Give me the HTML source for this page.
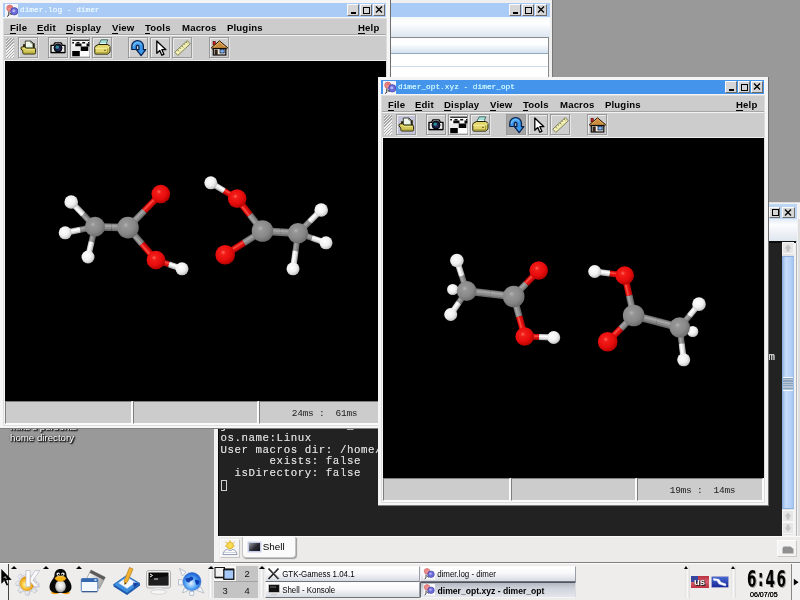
<!DOCTYPE html>
<html><head><meta charset="utf-8"><title>desktop</title>
<style>
html,body{margin:0;padding:0;overflow:hidden}
body{width:800px;height:600px;overflow:hidden;background:#999;position:relative;font-family:"Liberation Sans",sans-serif}
div,span,i,svg{position:absolute;box-sizing:border-box}
.jw{width:390.700px;height:428.800px;background:#f5f5f5;border-right:1px solid #6e6e6e;border-bottom:1px solid #808080}
.jw .tbar{left:3px;top:2.600px;width:382.700px;height:14.700px}
.jicon{left:1.500px;top:1px;width:13px;height:13px;overflow:hidden}
.ttl{left:17px;top:1.300px;font:7.800px/12px "Liberation Mono",monospace;white-space:pre;letter-spacing:0;text-shadow:0 0 .6px currentColor}
.wb{top:1.800px;width:12.300px;height:11.600px;background:#d6d6d6;border:1px solid;border-color:#fafafa #6c6c6c #6c6c6c #fafafa}
.wb svg{left:-1px;top:-1px}
.wb .mn{left:3px;top:6.500px;width:4.500px;height:1.700px;background:#000}
.wb .mx{left:2px;top:1.300px;width:7px;height:7.300px;border:1px solid #000;border-top-width:1.800px}
.inr{left:4px;top:18.500px;width:381.500px;height:406.500px;background:#f6f6f6;box-shadow:0 0 0 .8px #d8d8d8}
.mbar{left:0;top:0;width:381.500px;height:16.700px;border-bottom:1px solid #a6a6a6;background:#ccc}
.mbar span{top:3.200px;font:bold 9.600px/12px "Liberation Sans",sans-serif;color:#000;white-space:pre;letter-spacing:0.150px}
.mbar u{text-decoration:none;border-bottom:1px solid #000}
.tools{left:0;top:16.700px;width:381.500px;height:25.800px;background:#ccc;border-top:1px solid #f2f2f2;border-bottom:1.300px solid #ececec}
.grip{left:1.500px;top:2px;width:8.500px;height:20px;background:repeating-linear-gradient(135deg,#f0f0f0 0,#f0f0f0 1.100px,#a8a8a8 1.100px,#a8a8a8 2.200px)}
.tb{top:0.800px;width:20.300px;height:21.400px;border:1px solid #999;background:#cecece;box-shadow:inset 1px 1px 0 #ececec,1px 1px 0 #e6e6e6}
.tb svg{left:-1px;top:-1px}
.tb.sel{background:#c3c3da}
.tb.down{background:#a6a6a6;box-shadow:1px 1px 0 #e6e6e6}
.cv{left:1px;top:42.500px;background:#000}
.sb{left:1px;top:382.500px;width:380.500px;height:24px;background:#fafafa}
.sc{top:0;height:23.200px;background:#ccc;border:1.300px solid;border-color:#7e7e7e #fbfbfb #fbfbfb #7e7e7e}
.st{left:32.200px;top:5.900px;font:9.500px/12px "Liberation Mono",monospace;color:#1c1c1c;white-space:pre;letter-spacing:-0.230px}
.dtxt{font:9.700px/11px "Liberation Sans",sans-serif;color:#fff;white-space:pre;text-shadow:1px 1px 1px #222,1px 1px 1px #222,0 0 2px #444,1px 1px 2px #333}
.gw{left:390.500px;top:0;width:162px;height:90px;background:#efefef;border-right:1px solid #777}
.gt{left:0;top:2.600px;width:159px;height:14.700px;background:#a9cbf6}
.gm{left:0;top:17.300px;width:159px;height:20px;background:linear-gradient(#f4f8fc,#ffffff 30%,#dbe5f0)}
.gl{left:0;top:37px;width:158px;height:60px;background:#fff;border-top:1px solid #8a8a8a;border-right:1px solid #8a8a8a}
.gh{left:0;top:0;width:157px;height:16px;background:linear-gradient(#fafcfe,#ffffff 40%,#d4e2f0);border-bottom:1px solid #92a8be}
.gr{left:0;width:157px;height:1px;background:#cfdcec}
.kw{left:213.700px;top:202px;width:587px;height:361px;background:#f2f2f2;box-shadow:inset 0 1px 0 #dcdcdc}
.kt{left:3px;top:1.500px;width:580px;height:15.500px;background:#bdd6f4}
.km{left:3px;top:17px;width:580px;height:23px;background:linear-gradient(#e4ecf6,#fbfcfe 25%,#dfe6ee);border-bottom:1px solid #9aa}
.kterm{left:4px;top:39px;width:564px;height:294.500px;background:#222;overflow:hidden;border-top:2px solid #0c0c0c;border-left:1px solid #080808}
.kln{left:4px;top:39.300px;width:577.500px;height:1.700px;background:#141414}
.kx{margin:0;left:1.400px;font:10.800px/11.600px "Liberation Mono",monospace;color:#dadada;white-space:pre;letter-spacing:0.550px;text-shadow:0 0 .3px #aaa}
.kcur{left:1.800px;top:236.600px;width:6.300px;height:11.700px;border:1px solid #d0d0d0}
.ksb{left:568.300px;top:40.300px;width:12px;height:293.200px;background:#e4e4e4}
.ksa{left:0;width:12px;height:12px;background:#e6e6e6;border:1px solid #f6f6f6}
.ksa svg{left:-1px;top:-1px}
.kss{left:0;top:13.500px;width:11.700px;height:253px;background:linear-gradient(90deg,#9cbce8,#c8defa 30%,#bcd6f8 60%,#a8c8f2);border:1px solid #8cb0e0;border-right-color:#9cbcea}
.kss i{left:-0.500px;top:120px;width:10.500px;height:14.500px;background:repeating-linear-gradient(#8ea4bc 0,#8ea4bc 1.200px,#b4c6d8 1.200px,#b4c6d8 2.400px);border-top:1px solid #f4f8ff;border-bottom:1px solid #f4f8ff}
.krl{left:581.500px;top:41px;width:1px;height:293px;background:#b4b4b4}
.krs{left:584px;top:17px;width:3px;height:344px;background:#dedede}
.ktabs{left:4.500px;top:333.500px;width:582px;height:27px;background:#ecebe9;border-top:1.400px solid #fafafa}
.knew{left:1px;top:2.600px;width:20px;height:19px;border:1px solid;border-color:#fbfbfb #c4c4c4 #c4c4c4 #fbfbfb;background:#f4f4f4}
.knew svg{left:-1px;top:-1px}
.ktab{left:23px;top:0;width:54.500px;height:21.700px;background:#fafafa;border:1px solid #c4c4c4;border-top:none;border-radius:0 0 4px 4px;box-shadow:1px 1px 1px #999}
.kti{left:5.500px;top:5.800px;width:12.500px;height:9.800px;background:linear-gradient(135deg,#9a9aa2,#2a2a34 55%,#15151c);border:1px solid #c4cce8;box-shadow:0 0 0 .6px #d8dcf0}
.ktab span{left:20.200px;top:4.300px;font:9.900px/12px "Liberation Sans",sans-serif;color:#000}
.kri{left:558.500px;top:3px;width:20px;height:17px;background:#f4f4f4;border:1px solid;border-color:#fcfcfc #c8c8c8 #c8c8c8 #fcfcfc}
.kri svg{left:1.500px;top:0}
pre{position:absolute;box-sizing:border-box}
.pn{left:0;top:562px;width:800px;height:38px;background:#eeedeb;border-top:1px solid #808080;box-shadow:inset 0 1px 0 #fbfbfb}
.phl{left:0;top:0.500px;width:8.700px;height:37px;background:#f0f0f0;border-right:1px solid #444;border-bottom:1.500px solid #555}
.phl svg,.phr svg{left:0;top:0}
.phr{left:791px;top:1px;width:9.500px;height:36px;background:#f2f2f2;border-left:1px solid #888}
.ah{top:3.200px;width:0;height:0;border-left:3.500px solid transparent;border-right:3.500px solid transparent;border-bottom:3.700px solid #000}
.pi{overflow:visible}
.hd{top:3px;width:5px;height:32px;background:linear-gradient(90deg,#e2e2e2,#f8f8f8 50%,#d8d8d8)}
.pgr{left:214.300px;top:2.500px;width:43.500px;height:32.300px;background:#a2a2a2}
.pc{width:21.300px;height:15.700px;background:#c4c4c4}
.pc svg{left:0;top:0}
.pc span{left:0;top:2.500px;width:21.500px;text-align:center;font:9.400px/12px "Liberation Sans",sans-serif;color:#111}
.tk{width:155px;height:15.700px;background:linear-gradient(#ffffff,#f8f8fa 45%,#d6dae2);border:1px solid;border-color:#fcfcfc #9a9ea8 #70747c #f0f0f0}
.tk.act{background:linear-gradient(#b4b8c2,#d0d4dc 40%,#e4e6ec);border-color:#50545c #dcdce0 #f4f4f4 #60646c}
.tk svg{left:1px;top:0.300px}
.tk span{left:16.700px;top:1.600px;font:7.900px/12px "Liberation Sans",sans-serif;color:#000;white-space:pre;transform:scaleY(1.080)}
.tk.act span{font:bold 8.600px/12px "Liberation Sans",sans-serif;left:17px;top:1.800px;transform:none}
.fl{top:13px;width:17.500px;height:11.500px}
.fl.us{left:691px;background:linear-gradient(#b83040,#d86070 50%,#b83040)}
.fl.us::before{content:"";position:absolute;left:0;top:0;width:7px;height:5.500px;background:#3848a0}
.fl.us span{left:3px;top:-0.500px;font:bold 9.500px/11px "Liberation Sans",sans-serif;color:#fff;text-shadow:0 0 1px #000,1px 1px 0 #222}
.fl.nt{left:711px;background:linear-gradient(#4868d0,#182898);border:1px solid #a4a8d0;border-radius:1px}
.fl.nt svg{left:-1px;top:-1px}
.clk{left:747px;top:2.800px;font:bold 22.600px/26px "DejaVu Sans","Liberation Sans",sans-serif;color:#000;letter-spacing:2.600px;white-space:pre;transform:scaleX(.6);transform-origin:0 0;text-shadow:1.500px 1px 0 #a0a0a0}
.clk b{letter-spacing:3.500px;position:relative;top:-1px}
.dt{left:750px;top:27.800px;font:7.100px/9px "Liberation Sans",sans-serif;text-shadow:0 0 .3px #000;color:#000;white-space:pre}

.jw,.kw,.gw,.pn,.dtxt{will-change:transform}
.kt .wb{top:3.300px;height:10.800px}
.kt .wb:first-child{width:11.500px}
.ah.sm{top:3.400px;border-left-width:2.800px;border-right-width:2.800px;border-bottom-width:3.400px}
</style></head>
<body><div class="dtxt" style="left:10px;top:421px">mike's personal</div><div class="dtxt" style="left:10px;top:432px">home directory</div><div class="gw">
 <div class="gt">
  <div class="wb" style="left:118px"><i class="mn"></i></div>
  <div class="wb" style="left:130.500px"><i class="mx"></i></div>
  <div class="wb" style="left:144px"><svg width="12" height="11" viewBox="0 0 12 11"><path d="M3 2.500l6 6M9 2.500l-6 6" stroke="#000" stroke-width="1.300"/></svg></div>
 </div>
 <div class="gm"></div>
 <div class="gl"><div class="gh"></div><div class="gr" style="top:27.500px"></div><div class="gr" style="top:40.500px"></div></div>
</div>
<div class="kw">
 <div class="kt">
  <div class="wb" style="left:551.700px"><i class="mx"></i></div>
  <div class="wb" style="left:565.300px"><svg width="12" height="11" viewBox="0 0 12 11"><path d="M3 2.500l6 6M9 2.500l-6 6" stroke="#000" stroke-width="1.300"/></svg></div>
 </div>
 <div class="km"></div>
 <div class="kln"></div>
 <div class="kterm">
  <pre class="kx" style="top:177.700px">java.version:1.4.2_06</pre>
  <pre class="kx" style="top:190.200px">os.name:Linux
User macros dir: /home/mike/.jmol/macros
       exists: false
  isDirectory: false</pre>
  <div class="kcur"></div>
  <pre class="kx" style="left:549.500px;top:109px">m</pre>
 </div>
 <div class="ksb">
  <div class="ksa" style="top:0"><svg width="12" height="12" viewBox="0 0 12 12"><path d="M6 2.500l3.500 4h-2v3h-3v-3h-2z" fill="#c4c4c4"/></svg></div>
  <div class="kss"><i></i></div>
  <div class="ksa" style="top:268px"><svg width="12" height="12" viewBox="0 0 12 12"><path d="M6 2.500l3.500 4h-2v3h-3v-3h-2z" fill="#c4c4c4"/></svg></div>
  <div class="ksa" style="top:280px"><svg width="12" height="12" viewBox="0 0 12 12"><path d="M6 9.500l3.500-4h-2v-3h-3v3h-2z" fill="#c4c4c4"/></svg></div>
 </div>
 <div class="krl"></div><div class="krs"></div>
 <div class="ktabs">
  <div class="knew"><svg width="20" height="19" viewBox="0 0 20 19"><path d="M3 15.500c.5-3.500 2.500-5 4.500-5 1.200 1.300 3.800 1.300 5 0 2 0 4 1.500 4.500 5z" fill="#fdfdfd" stroke="#8a96b0" stroke-width=".9"/><path d="M3.500 13.500h13" stroke="#b0b8c8" stroke-width=".6"/><circle cx="10" cy="6.500" r="3.300" fill="#f8dc50" stroke="#d8a818" stroke-width=".8"/><path d="M10 1v2M5.500 2.800l1.300 1.500M14.500 2.800l-1.300 1.500M5 7h1.500M15 7h-1.500" stroke="#e4b020" stroke-width="1"/></svg></div>
  <div class="ktab"><i class="kti"></i><span>Shell</span></div>
  <div class="kri"><svg width="16" height="16" viewBox="0 0 16 16"><path d="M3.500 5.500h7l3 2.500v4.500h-11v-5z" fill="#909090"/></svg></div>
 </div>
</div>

<div class="jw" style="left:0px;top:0px">
 <div class="tbar" style="background:#a9cbf6">
  <div class="jicon"><svg width="14" height="14" viewBox="0 0 14 14" style="position:absolute;left:0;top:0"><rect width="14" height="14" fill="#f4f4f8"/><circle cx="4.800" cy="4.200" r="3.100" fill="#ee8c8c" stroke="#c05050" stroke-width=".6"/><path d="M3 3.500q1.800-1.500 3.600 0" fill="none" stroke="#b84848" stroke-width=".5"/><circle cx="9.300" cy="7.300" r="3.700" fill="#6c6cd8" stroke="#3434a0" stroke-width=".6"/><circle cx="8.800" cy="6.800" r="1.500" fill="#b4b4f6"/><path d="M3.800 7.500v3.800l-1.800 1.200M4.800 8.800l1.700 2.200" stroke="#1c1c1c" stroke-width=".9" fill="none"/></svg></div>
  <div class="ttl" style="color:#e8f6ff">dimer.log - dimer</div>
  <div class="wb" style="left:344px"><i class="mn"></i></div>
  <div class="wb" style="left:356.5px"><i class="mx"></i></div>
  <div class="wb" style="left:370px"><svg width="12" height="11" viewBox="0 0 12 11"><path d="M3 2.500l6 6M9 2.500l-6 6" stroke="#000" stroke-width="1.300"/></svg></div>
 </div>
 <div class="inr">
 <div class="mbar"><span style="left:6px"><u>F</u>ile</span><span style="left:33px"><u>E</u>dit</span><span style="left:62px"><u>D</u>isplay</span><span style="left:108px"><u>V</u>iew</span><span style="left:141px"><u>T</u>ools</span><span style="left:178px">Macros</span><span style="left:223px">Plugins</span><span style="left:354px"><u>H</u>elp</span></div>
 <div class="tools"><div class="grip"></div><div class="tb" style="left:13.7px"><svg width="21" height="22" viewBox="0 0 21 22"><path d="M5 7.200h3l.8-1h8v10.300H5z" fill="#2c2808"/><path d="M7.300 4h5.500l2.200 2v5.500H7.300z" fill="#f0f8ee" stroke="#1c1c10" stroke-width=".8"/><path d="M12.800 4v2h2.200" fill="none" stroke="#1c1c10" stroke-width=".6"/><path d="M8 9.500h6.500v2H8z" fill="#d4ecd8"/><path d="M3 11.800q-.3-2 1.400-2h2.400l1 1.200h8.400q1.400 0 1.400 1.300v3.400q0 1.300-1.400 1.300H6q-1.200 0-1.200-1.300v-1.500z" fill="#d4c858" stroke="#262204" stroke-width="1"/><path d="M5 11.300h2l1 1.200h8.500" fill="none" stroke="#f0e890" stroke-width=".8"/><path d="M5.500 16h11" stroke="#9a9030" stroke-width=".8"/></svg></div><div class="tb" style="left:43.7px"><svg width="21" height="22" viewBox="0 0 21 22"><path d="M3 8.300h2.600l1.200-2.300h6.400l1.200 2.300H17v7.300H3z" fill="#e4e4e4" stroke="#000" stroke-width="1.300" stroke-linejoin="round"/><path d="M3 15.400h14" stroke="#000" stroke-width="1.400"/><path d="M3.800 14h12.500" stroke="#fff" stroke-width=".9"/><path d="M7.500 6.500h5" stroke="#888" stroke-width="1"/><circle cx="10" cy="11" r="4" fill="#141c40" stroke="#000" stroke-width=".9"/><circle cx="9.300" cy="10.200" r="1.700" fill="#2c8c94"/><circle cx="11" cy="12" r="1" fill="#3c2c70"/></svg></div><div class="tb" style="left:65.6px"><svg width="21" height="22" viewBox="0 0 21 22"><rect x="2.200" y="2.600" width="17.200" height="16.600" fill="#fcfcfc"/><path d="M2.200 2.600h17.200v1.300H2.200z" fill="#222"/><path d="M3.500 3.900h2v1h-2zM7.500 3.900h2.300v1H7.500zM12 3.900h2.300v1H12zM16.500 3.900h2.300v1h-2.300z" fill="#eee"/><path d="M2.200 4.900h1.800v1.600H2.200zM6.500 4.900h3v1.600h-3zM12.200 4.900h3v1.600h-3zM18 4.900h1.400v1.600H18z" fill="#111"/><path d="M5.300 6.500h6.200v3H5.300zM16.500 6.500h2.900v3h-2.900z" fill="#0a0a0a"/><path d="M10.500 9.500h7.800V14h-7.800z" fill="#050505"/><path d="M2.200 14h7.600v5.200H2.200z" fill="#000"/><path d="M2.200 9.500h8.300V14H2.200z" fill="#ececec"/></svg></div><div class="tb" style="left:87.5px"><svg width="21" height="22" viewBox="0 0 21 22"><path d="M6.200 8.500l3-5.700h6.600l-2.300 5.700z" fill="#a4e0d8" stroke="#30544c" stroke-width=".8"/><path d="M8 6.500h6" stroke="#e4f8f4" stroke-width="1"/><path d="M2.800 10.300q0-1 1-1.300l2.500-1.500h9.500l2.200 1.800v5.500l-2.300 2.300H4q-1.200 0-1.200-1.200z" fill="#e2d66c" stroke="#242004" stroke-width="1" stroke-linejoin="round"/><path d="M3 11.300h12.500l2.300-2" fill="none" stroke="#fff8b0" stroke-width=".8"/><path d="M15.700 11.500v5.300" stroke="#8c8028" stroke-width=".8"/><path d="M3.500 15.800h12" stroke="#a89c38" stroke-width="1"/><path d="M12 13.300h2" stroke="#4c4410" stroke-width=".8"/></svg></div><div class="tb" style="left:124.2px"><svg width="21" height="22" viewBox="0 0 21 22"><path d="M3.800 12.500V9.300a5.800 5.800 0 0 1 11.600 0v3.400h2.400l-4.700 6-4.700-6h2.500V9.600a1.300 1.300 0 0 0-2.600 0v2.900z" fill="#3a98ec" stroke="#06204c" stroke-width="1.200" stroke-linejoin="round"/><path d="M5.300 9.500a4.300 4.300 0 0 1 8-1.800" fill="none" stroke="#8cccff" stroke-width="1"/></svg></div><div class="tb" style="left:146.1px"><svg width="21" height="22" viewBox="0 0 21 22"><path d="M6.800 4v12.300l3-2.800 2 4.700 2.100-.9-2-4.600h4z" fill="#fff" stroke="#000" stroke-width="1.300" stroke-linejoin="round"/></svg></div><div class="tb" style="left:168.0px"><svg width="21" height="22" viewBox="0 0 21 22"><path d="M2.800 15.200L15.300 3.600l3 3.200L5.800 18.400z" fill="#f2f0b4" stroke="#74744c" stroke-width=".9"/><path d="M5.600 12.800l1.500 1.600M7.800 10.800l1 1M9.900 8.800l1.500 1.600M12 6.800l1 1M14.100 4.900l1.500 1.600" stroke="#5c5c34" stroke-width=".7"/></svg></div><div class="tb" style="left:205.2px"><svg width="21" height="22" viewBox="0 0 21 22"><rect x="4" y="4.300" width="2.300" height="3.700" fill="#c41c1c" stroke="#400" stroke-width=".5"/><path d="M2.300 10.800l8.200-7 8.200 7-1.300 1.200H3.600z" fill="#c88c3c" stroke="#2c1804" stroke-width="1" stroke-linejoin="round"/><path d="M5 9.800l5.500-4.700 5.500 4.700" fill="none" stroke="#e8b868" stroke-width=".9"/><rect x="4.300" y="11.500" width="12.500" height="6.500" fill="#f4ecdc" stroke="#0c0c0c" stroke-width="1.200"/><rect x="5.500" y="12.500" width="3.200" height="5.500" fill="#30241c"/><rect x="11" y="12.500" width="4.200" height="3.500" fill="#4488d8" stroke="#0c1c3c" stroke-width=".7"/><path d="M13.100 12.500v3.500M11 14.200h4.200" stroke="#cce0f8" stroke-width=".5"/></svg></div></div>
 <svg class="cv" width="381" height="340" viewBox="0 0 381 340"><defs>
<radialGradient id="gC" cx="40%" cy="38%" r="68%"><stop offset="0" stop-color="#b4b4b4"/><stop offset="0.18" stop-color="#969696"/><stop offset="0.6" stop-color="#888888"/><stop offset="1" stop-color="#666666"/></radialGradient>
<radialGradient id="gO" cx="40%" cy="38%" r="68%"><stop offset="0" stop-color="#ff6a60"/><stop offset="0.18" stop-color="#f21c18"/><stop offset="0.6" stop-color="#e60c0c"/><stop offset="1" stop-color="#ac0000"/></radialGradient>
<radialGradient id="gH" cx="40%" cy="38%" r="68%"><stop offset="0" stop-color="#ffffff"/><stop offset="0.55" stop-color="#f0f0f0"/><stop offset="1" stop-color="#b8b8b8"/></radialGradient>
</defs><line x1="90.0" y1="165.8" x2="78.1" y2="153.4" stroke="#6c6c6c" stroke-width="6.0"/><line x1="89.7" y1="166.0" x2="77.8" y2="153.6" stroke="#8c8c8c" stroke-width="4.1"/><line x1="89.4" y1="166.4" x2="77.5" y2="154.0" stroke="#a4a4a4" stroke-width="1.6"/><line x1="78.1" y1="153.4" x2="66.2" y2="141.0" stroke="#b4b4b4" stroke-width="6.0"/><line x1="77.8" y1="153.6" x2="65.9" y2="141.2" stroke="#e6e6e6" stroke-width="4.1"/><line x1="77.5" y1="154.0" x2="65.6" y2="141.6" stroke="#ffffff" stroke-width="1.6"/><line x1="90.0" y1="165.8" x2="75.1" y2="168.8" stroke="#6c6c6c" stroke-width="6.0"/><line x1="89.9" y1="165.4" x2="75.0" y2="168.4" stroke="#8c8c8c" stroke-width="4.1"/><line x1="89.8" y1="165.0" x2="74.9" y2="168.0" stroke="#a4a4a4" stroke-width="1.6"/><line x1="75.1" y1="168.8" x2="60.2" y2="171.8" stroke="#b4b4b4" stroke-width="6.0"/><line x1="75.0" y1="168.4" x2="60.1" y2="171.4" stroke="#e6e6e6" stroke-width="4.1"/><line x1="74.9" y1="168.0" x2="60.0" y2="171.0" stroke="#ffffff" stroke-width="1.6"/><line x1="90.0" y1="165.8" x2="86.5" y2="180.9" stroke="#6c6c6c" stroke-width="6.0"/><line x1="89.6" y1="165.7" x2="86.1" y2="180.8" stroke="#8c8c8c" stroke-width="4.1"/><line x1="89.2" y1="165.6" x2="85.7" y2="180.7" stroke="#a4a4a4" stroke-width="1.6"/><line x1="86.5" y1="180.9" x2="83.0" y2="196.0" stroke="#b4b4b4" stroke-width="6.0"/><line x1="86.1" y1="180.8" x2="82.6" y2="195.9" stroke="#e6e6e6" stroke-width="4.1"/><line x1="85.7" y1="180.7" x2="82.2" y2="195.8" stroke="#ffffff" stroke-width="1.6"/><circle cx="66.2" cy="141" r="6.8" fill="url(#gH)"/><circle cx="60.2" cy="171.8" r="6.5" fill="url(#gH)"/><circle cx="83" cy="196" r="6.5" fill="url(#gH)"/><line x1="90.0" y1="165.8" x2="106.5" y2="166.2" stroke="#6c6c6c" stroke-width="7.6"/><line x1="90.0" y1="165.3" x2="106.5" y2="165.7" stroke="#8c8c8c" stroke-width="5.2"/><line x1="90.0" y1="164.7" x2="106.5" y2="165.1" stroke="#a4a4a4" stroke-width="2.0"/><line x1="106.5" y1="166.2" x2="123.0" y2="166.6" stroke="#6c6c6c" stroke-width="7.6"/><line x1="106.5" y1="165.7" x2="123.0" y2="166.1" stroke="#8c8c8c" stroke-width="5.2"/><line x1="106.5" y1="165.1" x2="123.0" y2="165.5" stroke="#a4a4a4" stroke-width="2.0"/><circle cx="90" cy="165.8" r="10" fill="url(#gC)"/><line x1="123.0" y1="166.6" x2="139.4" y2="149.8" stroke="#6c6c6c" stroke-width="6.6"/><line x1="122.7" y1="166.3" x2="139.1" y2="149.5" stroke="#8c8c8c" stroke-width="4.5"/><line x1="122.3" y1="166.0" x2="138.7" y2="149.2" stroke="#a4a4a4" stroke-width="1.7"/><line x1="139.4" y1="149.8" x2="155.8" y2="133.0" stroke="#b40808" stroke-width="6.6"/><line x1="139.1" y1="149.5" x2="155.5" y2="132.7" stroke="#e41212" stroke-width="4.5"/><line x1="138.7" y1="149.2" x2="155.1" y2="132.4" stroke="#f64a40" stroke-width="1.7"/><line x1="123.0" y1="166.6" x2="137.0" y2="182.8" stroke="#6c6c6c" stroke-width="6.6"/><line x1="122.7" y1="166.9" x2="136.7" y2="183.1" stroke="#8c8c8c" stroke-width="4.5"/><line x1="122.3" y1="167.2" x2="136.3" y2="183.4" stroke="#a4a4a4" stroke-width="1.7"/><line x1="137.0" y1="182.8" x2="151.0" y2="199.0" stroke="#b40808" stroke-width="6.6"/><line x1="136.7" y1="183.1" x2="150.7" y2="199.3" stroke="#e41212" stroke-width="4.5"/><line x1="136.3" y1="183.4" x2="150.3" y2="199.6" stroke="#f64a40" stroke-width="1.7"/><circle cx="123" cy="166.6" r="10.8" fill="url(#gC)"/><circle cx="155.8" cy="133" r="9.3" fill="url(#gO)"/><line x1="151.0" y1="199.0" x2="164.0" y2="203.4" stroke="#b40808" stroke-width="6.0"/><line x1="151.1" y1="198.7" x2="164.1" y2="203.1" stroke="#e41212" stroke-width="4.1"/><line x1="151.3" y1="198.2" x2="164.3" y2="202.6" stroke="#f64a40" stroke-width="1.6"/><line x1="164.0" y1="203.4" x2="177.0" y2="207.8" stroke="#b4b4b4" stroke-width="6.0"/><line x1="164.1" y1="203.1" x2="177.1" y2="207.5" stroke="#e6e6e6" stroke-width="4.1"/><line x1="164.3" y1="202.6" x2="177.3" y2="207.0" stroke="#ffffff" stroke-width="1.6"/><circle cx="151" cy="199" r="9.3" fill="url(#gO)"/><circle cx="177" cy="207.8" r="6.5" fill="url(#gH)"/><line x1="232.2" y1="137.6" x2="219.0" y2="129.7" stroke="#b40808" stroke-width="6.0"/><line x1="232.4" y1="137.3" x2="219.2" y2="129.4" stroke="#e41212" stroke-width="4.1"/><line x1="232.6" y1="136.9" x2="219.4" y2="129.0" stroke="#f64a40" stroke-width="1.6"/><line x1="219.0" y1="129.7" x2="205.8" y2="121.8" stroke="#b4b4b4" stroke-width="6.0"/><line x1="219.2" y1="129.4" x2="206.0" y2="121.5" stroke="#e6e6e6" stroke-width="4.1"/><line x1="219.4" y1="129.0" x2="206.2" y2="121.1" stroke="#ffffff" stroke-width="1.6"/><circle cx="205.8" cy="121.80000000000001" r="6.5" fill="url(#gH)"/><line x1="257.5" y1="170.0" x2="244.8" y2="153.8" stroke="#6c6c6c" stroke-width="6.6"/><line x1="257.2" y1="170.2" x2="244.5" y2="154.0" stroke="#8c8c8c" stroke-width="4.5"/><line x1="256.8" y1="170.6" x2="244.1" y2="154.4" stroke="#a4a4a4" stroke-width="1.7"/><line x1="244.8" y1="153.8" x2="232.2" y2="137.6" stroke="#b40808" stroke-width="6.6"/><line x1="244.5" y1="154.0" x2="231.9" y2="137.8" stroke="#e41212" stroke-width="4.5"/><line x1="244.1" y1="154.4" x2="231.5" y2="138.2" stroke="#f64a40" stroke-width="1.7"/><line x1="257.5" y1="170.0" x2="238.8" y2="181.9" stroke="#6c6c6c" stroke-width="6.6"/><line x1="257.3" y1="169.7" x2="238.6" y2="181.6" stroke="#8c8c8c" stroke-width="4.5"/><line x1="257.0" y1="169.2" x2="238.4" y2="181.1" stroke="#a4a4a4" stroke-width="1.7"/><line x1="238.8" y1="181.9" x2="220.2" y2="193.8" stroke="#b40808" stroke-width="6.6"/><line x1="238.6" y1="181.6" x2="220.0" y2="193.5" stroke="#e41212" stroke-width="4.5"/><line x1="238.4" y1="181.1" x2="219.7" y2="193.0" stroke="#f64a40" stroke-width="1.7"/><line x1="257.5" y1="170.0" x2="275.2" y2="171.1" stroke="#6c6c6c" stroke-width="7.6"/><line x1="257.5" y1="169.5" x2="275.3" y2="170.6" stroke="#8c8c8c" stroke-width="5.2"/><line x1="257.6" y1="168.9" x2="275.3" y2="170.0" stroke="#a4a4a4" stroke-width="2.0"/><line x1="275.2" y1="171.1" x2="293.0" y2="172.2" stroke="#6c6c6c" stroke-width="7.6"/><line x1="275.3" y1="170.6" x2="293.0" y2="171.7" stroke="#8c8c8c" stroke-width="5.2"/><line x1="275.3" y1="170.0" x2="293.1" y2="171.1" stroke="#a4a4a4" stroke-width="2.0"/><circle cx="232.2" cy="137.6" r="9.3" fill="url(#gO)"/><circle cx="220.2" cy="193.8" r="9.8" fill="url(#gO)"/><circle cx="257.5" cy="170" r="10.8" fill="url(#gC)"/><line x1="293.0" y1="172.2" x2="304.6" y2="160.6" stroke="#6c6c6c" stroke-width="6.0"/><line x1="292.7" y1="171.9" x2="304.3" y2="160.3" stroke="#8c8c8c" stroke-width="4.1"/><line x1="292.4" y1="171.6" x2="304.0" y2="160.0" stroke="#a4a4a4" stroke-width="1.6"/><line x1="304.6" y1="160.6" x2="316.2" y2="149.0" stroke="#b4b4b4" stroke-width="6.0"/><line x1="304.3" y1="160.3" x2="315.9" y2="148.7" stroke="#e6e6e6" stroke-width="4.1"/><line x1="304.0" y1="160.0" x2="315.6" y2="148.4" stroke="#ffffff" stroke-width="1.6"/><line x1="293.0" y1="172.2" x2="307.0" y2="177.0" stroke="#6c6c6c" stroke-width="6.0"/><line x1="293.1" y1="171.9" x2="307.1" y2="176.7" stroke="#8c8c8c" stroke-width="4.1"/><line x1="293.3" y1="171.4" x2="307.3" y2="176.2" stroke="#a4a4a4" stroke-width="1.6"/><line x1="307.0" y1="177.0" x2="321.0" y2="181.8" stroke="#b4b4b4" stroke-width="6.0"/><line x1="307.1" y1="176.7" x2="321.1" y2="181.5" stroke="#e6e6e6" stroke-width="4.1"/><line x1="307.3" y1="176.2" x2="321.3" y2="181.0" stroke="#ffffff" stroke-width="1.6"/><line x1="293.0" y1="172.2" x2="290.5" y2="190.0" stroke="#6c6c6c" stroke-width="6.0"/><line x1="292.6" y1="172.1" x2="290.1" y2="189.9" stroke="#8c8c8c" stroke-width="4.1"/><line x1="292.2" y1="172.1" x2="289.7" y2="189.9" stroke="#a4a4a4" stroke-width="1.6"/><line x1="290.5" y1="190.0" x2="288.0" y2="207.8" stroke="#b4b4b4" stroke-width="6.0"/><line x1="290.1" y1="189.9" x2="287.6" y2="207.7" stroke="#e6e6e6" stroke-width="4.1"/><line x1="289.7" y1="189.9" x2="287.2" y2="207.7" stroke="#ffffff" stroke-width="1.6"/><circle cx="293" cy="172.2" r="10.3" fill="url(#gC)"/><circle cx="316.2" cy="149" r="6.8" fill="url(#gH)"/><circle cx="321" cy="181.8" r="6.5" fill="url(#gH)"/><circle cx="288" cy="207.8" r="6.5" fill="url(#gH)"/></svg>
 <div class="sb">
  <div class="sc" style="left:0;width:127px"></div>
  <div class="sc" style="left:128px;width:124.500px"></div>
  <div class="sc" style="left:253.500px;width:126px"><span class="st">24ms :  61ms</span></div>
 </div>
 </div>
</div>
<div class="jw" style="left:378.3px;top:76.5px">
 <div class="tbar" style="background:#4394ea">
  <div class="jicon"><svg width="14" height="14" viewBox="0 0 14 14" style="position:absolute;left:0;top:0"><rect width="14" height="14" fill="#f4f4f8"/><circle cx="4.800" cy="4.200" r="3.100" fill="#ee8c8c" stroke="#c05050" stroke-width=".6"/><path d="M3 3.500q1.800-1.500 3.600 0" fill="none" stroke="#b84848" stroke-width=".5"/><circle cx="9.300" cy="7.300" r="3.700" fill="#6c6cd8" stroke="#3434a0" stroke-width=".6"/><circle cx="8.800" cy="6.800" r="1.500" fill="#b4b4f6"/><path d="M3.800 7.500v3.800l-1.800 1.200M4.800 8.800l1.700 2.200" stroke="#1c1c1c" stroke-width=".9" fill="none"/></svg></div>
  <div class="ttl" style="color:#c8f4ff">dimer_opt.xyz - dimer_opt</div>
  <div class="wb" style="left:344px"><i class="mn"></i></div>
  <div class="wb" style="left:356.5px"><i class="mx"></i></div>
  <div class="wb" style="left:370px"><svg width="12" height="11" viewBox="0 0 12 11"><path d="M3 2.500l6 6M9 2.500l-6 6" stroke="#000" stroke-width="1.300"/></svg></div>
 </div>
 <div class="inr">
 <div class="mbar"><span style="left:6px"><u>F</u>ile</span><span style="left:33px"><u>E</u>dit</span><span style="left:62px"><u>D</u>isplay</span><span style="left:108px"><u>V</u>iew</span><span style="left:141px"><u>T</u>ools</span><span style="left:178px">Macros</span><span style="left:223px">Plugins</span><span style="left:354px"><u>H</u>elp</span></div>
 <div class="tools"><div class="grip"></div><div class="tb sel" style="left:13.7px"><svg width="21" height="22" viewBox="0 0 21 22"><path d="M5 7.200h3l.8-1h8v10.300H5z" fill="#2c2808"/><path d="M7.300 4h5.500l2.200 2v5.500H7.300z" fill="#f0f8ee" stroke="#1c1c10" stroke-width=".8"/><path d="M12.800 4v2h2.200" fill="none" stroke="#1c1c10" stroke-width=".6"/><path d="M8 9.500h6.500v2H8z" fill="#d4ecd8"/><path d="M3 11.800q-.3-2 1.400-2h2.400l1 1.200h8.400q1.400 0 1.400 1.300v3.400q0 1.300-1.400 1.300H6q-1.200 0-1.200-1.300v-1.500z" fill="#d4c858" stroke="#262204" stroke-width="1"/><path d="M5 11.300h2l1 1.200h8.500" fill="none" stroke="#f0e890" stroke-width=".8"/><path d="M5.500 16h11" stroke="#9a9030" stroke-width=".8"/></svg></div><div class="tb" style="left:43.7px"><svg width="21" height="22" viewBox="0 0 21 22"><path d="M3 8.300h2.600l1.200-2.300h6.400l1.200 2.300H17v7.300H3z" fill="#e4e4e4" stroke="#000" stroke-width="1.300" stroke-linejoin="round"/><path d="M3 15.400h14" stroke="#000" stroke-width="1.400"/><path d="M3.800 14h12.500" stroke="#fff" stroke-width=".9"/><path d="M7.500 6.500h5" stroke="#888" stroke-width="1"/><circle cx="10" cy="11" r="4" fill="#141c40" stroke="#000" stroke-width=".9"/><circle cx="9.300" cy="10.200" r="1.700" fill="#2c8c94"/><circle cx="11" cy="12" r="1" fill="#3c2c70"/></svg></div><div class="tb" style="left:65.6px"><svg width="21" height="22" viewBox="0 0 21 22"><rect x="2.200" y="2.600" width="17.200" height="16.600" fill="#fcfcfc"/><path d="M2.200 2.600h17.200v1.300H2.200z" fill="#222"/><path d="M3.500 3.900h2v1h-2zM7.500 3.900h2.300v1H7.500zM12 3.900h2.300v1H12zM16.500 3.900h2.300v1h-2.300z" fill="#eee"/><path d="M2.200 4.900h1.800v1.600H2.200zM6.500 4.900h3v1.600h-3zM12.200 4.900h3v1.600h-3zM18 4.900h1.400v1.600H18z" fill="#111"/><path d="M5.300 6.500h6.200v3H5.300zM16.500 6.500h2.900v3h-2.900z" fill="#0a0a0a"/><path d="M10.500 9.500h7.800V14h-7.800z" fill="#050505"/><path d="M2.200 14h7.600v5.200H2.200z" fill="#000"/><path d="M2.200 9.500h8.300V14H2.200z" fill="#ececec"/></svg></div><div class="tb" style="left:87.5px"><svg width="21" height="22" viewBox="0 0 21 22"><path d="M6.200 8.500l3-5.700h6.600l-2.300 5.700z" fill="#a4e0d8" stroke="#30544c" stroke-width=".8"/><path d="M8 6.500h6" stroke="#e4f8f4" stroke-width="1"/><path d="M2.800 10.300q0-1 1-1.300l2.500-1.500h9.500l2.200 1.800v5.500l-2.300 2.300H4q-1.200 0-1.200-1.200z" fill="#e2d66c" stroke="#242004" stroke-width="1" stroke-linejoin="round"/><path d="M3 11.300h12.500l2.300-2" fill="none" stroke="#fff8b0" stroke-width=".8"/><path d="M15.700 11.500v5.300" stroke="#8c8028" stroke-width=".8"/><path d="M3.500 15.800h12" stroke="#a89c38" stroke-width="1"/><path d="M12 13.300h2" stroke="#4c4410" stroke-width=".8"/></svg></div><div class="tb down" style="left:124.2px"><svg width="21" height="22" viewBox="0 0 21 22"><path d="M3.800 12.500V9.300a5.800 5.800 0 0 1 11.600 0v3.400h2.400l-4.700 6-4.700-6h2.500V9.600a1.300 1.300 0 0 0-2.600 0v2.900z" fill="#3a98ec" stroke="#06204c" stroke-width="1.200" stroke-linejoin="round"/><path d="M5.300 9.500a4.300 4.300 0 0 1 8-1.800" fill="none" stroke="#8cccff" stroke-width="1"/></svg></div><div class="tb" style="left:146.1px"><svg width="21" height="22" viewBox="0 0 21 22"><path d="M6.800 4v12.300l3-2.800 2 4.700 2.100-.9-2-4.600h4z" fill="#fff" stroke="#000" stroke-width="1.300" stroke-linejoin="round"/></svg></div><div class="tb" style="left:168.0px"><svg width="21" height="22" viewBox="0 0 21 22"><path d="M2.800 15.200L15.300 3.600l3 3.200L5.800 18.400z" fill="#f2f0b4" stroke="#74744c" stroke-width=".9"/><path d="M5.600 12.800l1.500 1.600M7.800 10.800l1 1M9.900 8.800l1.500 1.600M12 6.800l1 1M14.100 4.900l1.500 1.600" stroke="#5c5c34" stroke-width=".7"/></svg></div><div class="tb" style="left:205.2px"><svg width="21" height="22" viewBox="0 0 21 22"><rect x="4" y="4.300" width="2.300" height="3.700" fill="#c41c1c" stroke="#400" stroke-width=".5"/><path d="M2.300 10.800l8.200-7 8.200 7-1.300 1.200H3.600z" fill="#c88c3c" stroke="#2c1804" stroke-width="1" stroke-linejoin="round"/><path d="M5 9.800l5.500-4.700 5.500 4.700" fill="none" stroke="#e8b868" stroke-width=".9"/><rect x="4.300" y="11.500" width="12.500" height="6.500" fill="#f4ecdc" stroke="#0c0c0c" stroke-width="1.200"/><rect x="5.500" y="12.500" width="3.200" height="5.500" fill="#30241c"/><rect x="11" y="12.500" width="4.200" height="3.500" fill="#4488d8" stroke="#0c1c3c" stroke-width=".7"/><path d="M13.100 12.500v3.500M11 14.200h4.200" stroke="#cce0f8" stroke-width=".5"/></svg></div></div>
 <svg class="cv" width="381" height="340" viewBox="0 0 381 340"><line x1="83.7" y1="153.0" x2="76.7" y2="152.2" stroke="#6c6c6c" stroke-width="6.0"/><line x1="83.7" y1="152.6" x2="76.7" y2="151.9" stroke="#8c8c8c" stroke-width="4.1"/><line x1="83.8" y1="152.2" x2="76.8" y2="151.4" stroke="#a4a4a4" stroke-width="1.6"/><line x1="76.7" y1="152.2" x2="69.7" y2="151.5" stroke="#b4b4b4" stroke-width="6.0"/><line x1="76.7" y1="151.9" x2="69.7" y2="151.1" stroke="#e6e6e6" stroke-width="4.1"/><line x1="76.8" y1="151.4" x2="69.8" y2="150.7" stroke="#ffffff" stroke-width="1.6"/><circle cx="69.69999999999999" cy="151.5" r="5.6" fill="url(#gH)"/><line x1="83.7" y1="153.0" x2="78.8" y2="137.8" stroke="#6c6c6c" stroke-width="6.0"/><line x1="83.4" y1="153.1" x2="78.5" y2="137.9" stroke="#8c8c8c" stroke-width="4.1"/><line x1="82.9" y1="153.3" x2="78.0" y2="138.0" stroke="#a4a4a4" stroke-width="1.6"/><line x1="78.8" y1="137.8" x2="73.9" y2="122.5" stroke="#b4b4b4" stroke-width="6.0"/><line x1="78.5" y1="137.9" x2="73.6" y2="122.6" stroke="#e6e6e6" stroke-width="4.1"/><line x1="78.0" y1="138.0" x2="73.1" y2="122.8" stroke="#ffffff" stroke-width="1.6"/><line x1="83.7" y1="153.0" x2="75.7" y2="164.8" stroke="#6c6c6c" stroke-width="6.0"/><line x1="83.4" y1="152.8" x2="75.4" y2="164.5" stroke="#8c8c8c" stroke-width="4.1"/><line x1="83.0" y1="152.5" x2="75.0" y2="164.3" stroke="#a4a4a4" stroke-width="1.6"/><line x1="75.7" y1="164.8" x2="67.7" y2="176.5" stroke="#b4b4b4" stroke-width="6.0"/><line x1="75.4" y1="164.5" x2="67.4" y2="176.3" stroke="#e6e6e6" stroke-width="4.1"/><line x1="75.0" y1="164.3" x2="67.0" y2="176.0" stroke="#ffffff" stroke-width="1.6"/><circle cx="73.89999999999998" cy="122.5" r="6.8" fill="url(#gH)"/><circle cx="67.69999999999999" cy="176.5" r="6.5" fill="url(#gH)"/><line x1="83.7" y1="153.0" x2="107.2" y2="155.8" stroke="#6c6c6c" stroke-width="7.6"/><line x1="83.8" y1="152.5" x2="107.3" y2="155.3" stroke="#8c8c8c" stroke-width="5.2"/><line x1="83.8" y1="151.9" x2="107.3" y2="154.7" stroke="#a4a4a4" stroke-width="2.0"/><line x1="107.2" y1="155.8" x2="130.7" y2="158.5" stroke="#6c6c6c" stroke-width="7.6"/><line x1="107.3" y1="155.3" x2="130.8" y2="158.0" stroke="#8c8c8c" stroke-width="5.2"/><line x1="107.3" y1="154.7" x2="130.8" y2="157.4" stroke="#a4a4a4" stroke-width="2.0"/><circle cx="83.69999999999999" cy="153.0" r="9.9" fill="url(#gC)"/><line x1="130.7" y1="158.5" x2="143.2" y2="145.5" stroke="#6c6c6c" stroke-width="6.6"/><line x1="130.4" y1="158.2" x2="142.9" y2="145.2" stroke="#8c8c8c" stroke-width="4.5"/><line x1="130.0" y1="157.9" x2="142.5" y2="144.9" stroke="#a4a4a4" stroke-width="1.7"/><line x1="143.2" y1="145.5" x2="155.7" y2="132.5" stroke="#b40808" stroke-width="6.6"/><line x1="142.9" y1="145.2" x2="155.4" y2="132.2" stroke="#e41212" stroke-width="4.5"/><line x1="142.5" y1="144.9" x2="155.0" y2="131.9" stroke="#f64a40" stroke-width="1.7"/><line x1="130.7" y1="158.5" x2="136.2" y2="178.5" stroke="#6c6c6c" stroke-width="6.6"/><line x1="130.3" y1="158.6" x2="135.8" y2="178.6" stroke="#8c8c8c" stroke-width="4.5"/><line x1="129.8" y1="158.7" x2="135.3" y2="178.7" stroke="#a4a4a4" stroke-width="1.7"/><line x1="136.2" y1="178.5" x2="141.7" y2="198.5" stroke="#b40808" stroke-width="6.6"/><line x1="135.8" y1="178.6" x2="141.3" y2="198.6" stroke="#e41212" stroke-width="4.5"/><line x1="135.3" y1="178.7" x2="140.8" y2="198.7" stroke="#f64a40" stroke-width="1.7"/><circle cx="130.7" cy="158.5" r="10.8" fill="url(#gC)"/><circle cx="155.7" cy="132.5" r="9.3" fill="url(#gO)"/><line x1="141.7" y1="198.5" x2="156.2" y2="199.0" stroke="#b40808" stroke-width="6.0"/><line x1="141.7" y1="198.1" x2="156.2" y2="198.6" stroke="#e41212" stroke-width="4.1"/><line x1="141.7" y1="197.7" x2="156.2" y2="198.2" stroke="#f64a40" stroke-width="1.6"/><line x1="156.2" y1="199.0" x2="170.7" y2="199.5" stroke="#b4b4b4" stroke-width="6.0"/><line x1="156.2" y1="198.6" x2="170.7" y2="199.1" stroke="#e6e6e6" stroke-width="4.1"/><line x1="156.2" y1="198.2" x2="170.7" y2="198.7" stroke="#ffffff" stroke-width="1.6"/><circle cx="141.7" cy="198.5" r="9.3" fill="url(#gO)"/><circle cx="170.7" cy="199.5" r="6.5" fill="url(#gH)"/><line x1="241.7" y1="137.5" x2="226.7" y2="135.5" stroke="#b40808" stroke-width="6.0"/><line x1="241.7" y1="137.1" x2="226.7" y2="135.1" stroke="#e41212" stroke-width="4.1"/><line x1="241.8" y1="136.7" x2="226.8" y2="134.7" stroke="#f64a40" stroke-width="1.6"/><line x1="226.7" y1="135.5" x2="211.7" y2="133.5" stroke="#b4b4b4" stroke-width="6.0"/><line x1="226.7" y1="135.1" x2="211.7" y2="133.1" stroke="#e6e6e6" stroke-width="4.1"/><line x1="226.8" y1="134.7" x2="211.8" y2="132.7" stroke="#ffffff" stroke-width="1.6"/><circle cx="211.7" cy="133.5" r="6.5" fill="url(#gH)"/><line x1="250.7" y1="177.5" x2="246.2" y2="157.5" stroke="#6c6c6c" stroke-width="6.6"/><line x1="250.3" y1="177.6" x2="245.8" y2="157.6" stroke="#8c8c8c" stroke-width="4.5"/><line x1="249.8" y1="177.7" x2="245.3" y2="157.7" stroke="#a4a4a4" stroke-width="1.7"/><line x1="246.2" y1="157.5" x2="241.7" y2="137.5" stroke="#b40808" stroke-width="6.6"/><line x1="245.8" y1="157.6" x2="241.3" y2="137.6" stroke="#e41212" stroke-width="4.5"/><line x1="245.3" y1="157.7" x2="240.8" y2="137.7" stroke="#f64a40" stroke-width="1.7"/><line x1="250.7" y1="177.5" x2="237.7" y2="190.6" stroke="#6c6c6c" stroke-width="6.6"/><line x1="250.4" y1="177.2" x2="237.4" y2="190.3" stroke="#8c8c8c" stroke-width="4.5"/><line x1="250.0" y1="176.8" x2="237.0" y2="189.9" stroke="#a4a4a4" stroke-width="1.7"/><line x1="237.7" y1="190.6" x2="224.7" y2="203.7" stroke="#b40808" stroke-width="6.6"/><line x1="237.4" y1="190.3" x2="224.4" y2="203.4" stroke="#e41212" stroke-width="4.5"/><line x1="237.0" y1="189.9" x2="224.0" y2="203.0" stroke="#f64a40" stroke-width="1.7"/><circle cx="241.7" cy="137.5" r="9.3" fill="url(#gO)"/><circle cx="224.7" cy="203.7" r="9.8" fill="url(#gO)"/><line x1="296.7" y1="189.5" x2="303.2" y2="191.5" stroke="#6c6c6c" stroke-width="6.0"/><line x1="296.8" y1="189.2" x2="303.3" y2="191.2" stroke="#8c8c8c" stroke-width="4.1"/><line x1="296.9" y1="188.7" x2="303.4" y2="190.7" stroke="#a4a4a4" stroke-width="1.6"/><line x1="303.2" y1="191.5" x2="309.7" y2="193.5" stroke="#b4b4b4" stroke-width="6.0"/><line x1="303.3" y1="191.2" x2="309.8" y2="193.2" stroke="#e6e6e6" stroke-width="4.1"/><line x1="303.4" y1="190.7" x2="309.9" y2="192.7" stroke="#ffffff" stroke-width="1.6"/><circle cx="309.7" cy="193.5" r="5.6" fill="url(#gH)"/><line x1="250.7" y1="177.5" x2="273.7" y2="183.5" stroke="#6c6c6c" stroke-width="7.6"/><line x1="250.8" y1="177.1" x2="273.8" y2="183.1" stroke="#8c8c8c" stroke-width="5.2"/><line x1="251.0" y1="176.5" x2="274.0" y2="182.5" stroke="#a4a4a4" stroke-width="2.0"/><line x1="273.7" y1="183.5" x2="296.7" y2="189.5" stroke="#6c6c6c" stroke-width="7.6"/><line x1="273.8" y1="183.1" x2="296.8" y2="189.1" stroke="#8c8c8c" stroke-width="5.2"/><line x1="274.0" y1="182.5" x2="297.0" y2="188.5" stroke="#a4a4a4" stroke-width="2.0"/><circle cx="250.7" cy="177.5" r="10.8" fill="url(#gC)"/><line x1="296.7" y1="189.5" x2="306.3" y2="177.8" stroke="#6c6c6c" stroke-width="6.0"/><line x1="296.4" y1="189.3" x2="306.1" y2="177.6" stroke="#8c8c8c" stroke-width="4.1"/><line x1="296.1" y1="189.0" x2="305.7" y2="177.3" stroke="#a4a4a4" stroke-width="1.6"/><line x1="306.3" y1="177.8" x2="316.0" y2="166.1" stroke="#b4b4b4" stroke-width="6.0"/><line x1="306.1" y1="177.6" x2="315.7" y2="165.9" stroke="#e6e6e6" stroke-width="4.1"/><line x1="305.7" y1="177.3" x2="315.4" y2="165.6" stroke="#ffffff" stroke-width="1.6"/><line x1="296.7" y1="189.5" x2="298.7" y2="205.7" stroke="#6c6c6c" stroke-width="6.0"/><line x1="296.3" y1="189.5" x2="298.3" y2="205.7" stroke="#8c8c8c" stroke-width="4.1"/><line x1="295.9" y1="189.6" x2="297.9" y2="205.8" stroke="#a4a4a4" stroke-width="1.6"/><line x1="298.7" y1="205.7" x2="300.7" y2="221.8" stroke="#b4b4b4" stroke-width="6.0"/><line x1="298.3" y1="205.7" x2="300.3" y2="221.8" stroke="#e6e6e6" stroke-width="4.1"/><line x1="297.9" y1="205.8" x2="299.9" y2="221.9" stroke="#ffffff" stroke-width="1.6"/><circle cx="296.7" cy="189.5" r="10.3" fill="url(#gC)"/><circle cx="315.99999999999994" cy="166.10000000000002" r="6.8" fill="url(#gH)"/><circle cx="300.7" cy="221.8" r="6.5" fill="url(#gH)"/></svg>
 <div class="sb">
  <div class="sc" style="left:0;width:127px"></div>
  <div class="sc" style="left:128px;width:124.500px"></div>
  <div class="sc" style="left:253.500px;width:126px"><span class="st">19ms :  14ms</span></div>
 </div>
 </div>
</div><div class="pn">
 <div class="phl"></div>
 <svg class="cur" width="14" height="20" viewBox="0 0 14 20" style="left:0;top:5px"><path d="M1.300 1v14.800l3.200-2.900 2.100 4.700 1.600-.7-2.100-4.600 5.600-.6z" fill="#000"/><path d="M3.600 9.700l1.800-1 .9 2.200M3.300 13.200l1-.9" fill="none" stroke="#e8e8e8" stroke-width=".8"/></svg>
 <i class="ah" style="left:10.600px"></i><i class="ah" style="left:43.200px"></i><i class="ah" style="left:76.100px"></i>
 <!-- K menu -->
 <svg class="pi" style="left:14px;top:4px" width="28" height="30" viewBox="0 0 28 30">
  <defs><radialGradient id="kg" cx="42%" cy="58%" r="55%"><stop offset="0" stop-color="#fffbe0"/><stop offset=".35" stop-color="#fcd858"/><stop offset=".75" stop-color="#f4ac20"/><stop offset="1" stop-color="#d88808"/></radialGradient>
  <linearGradient id="kw" x1="0" y1="0" x2="1" y2="1"><stop offset="0" stop-color="#fafafc"/><stop offset="1" stop-color="#c8ccd8"/></linearGradient></defs>
  <g fill="url(#kw)" stroke="#b4b8c4" stroke-width=".5"><circle cx="13.500" cy="16.500" r="9"/>
  <rect x="11.300" y="24" width="4.400" height="4.300" rx="1.200"/><rect x="1.800" y="14.300" width="4.300" height="4.400" rx="1.200"/><rect x="20.800" y="15.500" width="4.300" height="4.400" rx="1.200"/>
  <rect x="4.300" y="7.300" width="4.400" height="4.400" rx="1.200" transform="rotate(-45 6.500 9.500)"/><rect x="4.300" y="21.300" width="4.400" height="4.400" rx="1.200" transform="rotate(45 6.500 23.500)"/><rect x="18.300" y="21.300" width="4.400" height="4.400" rx="1.200" transform="rotate(-45 20.500 23.500)"/></g>
  <circle cx="13" cy="16.500" r="7" fill="url(#kg)" stroke="#e09c18" stroke-width=".8"/>
  <path d="M12 3.500h4.200v16.300H12z" fill="#fdfdfd" stroke="#a8acb8" stroke-width=".6"/><path d="M16.200 11.300L21.200 3.500h4.600l-6.800 9.700 6.300 6.600h-4.800l-4.300-5.200z" fill="#fafafc" stroke="#a8acb8" stroke-width=".6"/>
 </svg>
 <!-- penguin -->
 <svg class="pi" style="left:47px;top:5.300px" width="28" height="27" viewBox="0 0 28 30" preserveAspectRatio="none">
  <defs><radialGradient id="pg" cx="50%" cy="40%" r="60%"><stop offset="0" stop-color="#ffffff"/><stop offset=".6" stop-color="#dadada"/><stop offset="1" stop-color="#8c8c8c"/></radialGradient></defs>
  <ellipse cx="8" cy="27.300" rx="3.800" ry="1.900" fill="#f0a010"/><ellipse cx="19" cy="27.300" rx="3.800" ry="1.900" fill="#f0a010"/>
  <path d="M13.500 1c3.800 0 6 3 6 7 0 2 1.300 3.500 3 6.500 2 3.500 2.500 7 1.500 9.500-1 2.500-3.500 3.800-6 3.800h-9c-2.500 0-5-1.300-6-3.800-1-2.500-.5-6 1.500-9.500 1.700-3 3-4.500 3-6.500 0-4 2.200-7 6-7z" fill="#080808"/>
  <ellipse cx="13.500" cy="20.500" rx="5.300" ry="6.800" fill="url(#pg)"/>
  <ellipse cx="11.200" cy="6.800" rx="1.700" ry="1.900" fill="#fff"/><ellipse cx="15.900" cy="6.800" rx="1.700" ry="1.900" fill="#fff"/><circle cx="11.600" cy="7.200" r=".8" fill="#000"/><circle cx="15.500" cy="7.200" r=".8" fill="#000"/>
  <path d="M7.800 11.500c2-3.500 9.400-3.500 11.400 0-1.500 4.500-9.900 4.500-11.400 0z" fill="#f8b414" stroke="#c88000" stroke-width=".5"/><path d="M9.500 10.300c2-1.500 6-1.500 8 0" fill="none" stroke="#ffd860" stroke-width=".9"/>
 </svg>
 <!-- windows -->
 <svg class="pi" style="left:80px;top:4px" width="28" height="28" viewBox="0 0 28 28">
  <defs><linearGradient id="bw" x1="0" y1="0" x2="1" y2="0"><stop offset="0" stop-color="#fafafa"/><stop offset="1" stop-color="#a8a8a8"/></linearGradient></defs><g transform="rotate(27 11 3)"><rect x="11" y="3" width="16" height="12.500" fill="url(#bw)" stroke="#888" stroke-width=".6"/><rect x="11" y="3" width="16" height="3" fill="#5a5a5a"/></g>
  <rect x="1.300" y="11.500" width="16.500" height="13" rx="1" fill="#f4f8ff" stroke="#4a78b8" stroke-width=".9"/><path d="M1.300 12.500q0-1 1-1h14.500q1 0 1 1v2.500H1.300z" fill="#3468b0"/><rect x="14.500" y="12.300" width="2" height="1.500" fill="#e8f0ff"/><path d="M1.800 24.800h15.500" stroke="#2a4a80" stroke-width="1"/>
 </svg>
 <!-- pencil pad -->
 <svg class="pi" style="left:112px;top:2px" width="30" height="30" viewBox="0 0 30 30">
  <path d="M1.500 19.500l13-9 13.500 8-13 9.500z" fill="#3c90e0" stroke="#1a50a0" stroke-width=".7"/><path d="M1.500 19.500l13.500 8.500v2l-13.500-8.500zM15 28l13-9.500v2l-13 9.500z" fill="#1a58b0"/>
  <path d="M6.500 18l8.500-6 8.500 5.500-8.500 6z" fill="#f6f8fc" stroke="#b8c8e0" stroke-width=".5"/><path d="M21 17.500l6 1-5 4z" fill="#1840a0"/>
  <path d="M17.500 2.500l3.500 1.500-5.500 13-2.800 2.500-.5-4z" fill="#f0b030" stroke="#a87010" stroke-width=".6"/><path d="M12.700 19.500l.5-2 1.300.8z" fill="#222"/>
 </svg>
 <!-- terminal -->
 <svg class="pi" style="left:145px;top:4.500px" width="28" height="28" viewBox="0 0 28 28">
  <rect x="1.500" y="2.500" width="24" height="17.500" rx="2" fill="#f0f0f0" stroke="#a8a8a8" stroke-width=".9"/><rect x="3.500" y="4.500" width="20" height="13" fill="#0a0a0a"/><path d="M3.500 11l20-3v9.500h-20z" fill="#333" opacity=".5"/>
  <path d="M5 6l2.500 1.500-2.500 1.500" fill="none" stroke="#fff" stroke-width="1"/><path d="M9 11h4" stroke="#ddd" stroke-width="1"/>
  <path d="M9.500 20h8l1 3h-10z" fill="#e8e8e8"/><ellipse cx="13.500" cy="24" rx="8" ry="2.200" fill="#f6f6f6" stroke="#c8c8c8" stroke-width=".7"/>
 </svg>
 <!-- konqueror -->
 <svg class="pi" style="left:177px;top:2.500px" width="30" height="30" viewBox="0 0 30 30">
  <defs><radialGradient id="eg" cx="45%" cy="60%" r="60%"><stop offset="0" stop-color="#e8f4ff"/><stop offset=".5" stop-color="#58a8f8"/><stop offset="1" stop-color="#1458d0"/></radialGradient></defs>
  <g fill="#f4f6fa" stroke="#a4acbc" stroke-width=".7"><path d="M2.500 2.500l6.500 3.500-3.500 4zM1.500 13.500l4.500.5v5l-4.500 0zM5.500 27l2-5.500 3.500 3zM12.500 25.500h4.500l-.5 4h-3.500zM27 27l-7-2.500 3.500-4z"/></g>
  <circle cx="15" cy="15.500" r="9" fill="url(#eg)" stroke="#3070d0" stroke-width=".6"/>
  <path d="M8.500 12.500c2-1 4 0 5-2 1.500 0 3 1 3 2.500-1.500 2-4 1.500-4 3.500-2 .5-4-1.500-4-4zM18 14c1.500-.5 3.500 0 4.500 1.500 0 2-1.500 3.500-3 3.500-.5-2-2-3-1.500-5z" fill="#1040b0"/>
 </svg>
 <div class="hd" style="left:207.500px"></div><i class="ah" style="left:207.500px"></i>
 <div class="pgr">
  <div class="pc" style="left:0;top:0;background:#f8f8f8"><svg width="22" height="16" viewBox="0 0 22 16"><rect x="1" y="1.500" width="9.500" height="10" fill="#f0f0f0" stroke="#111" stroke-width="1"/><path d="M1 11.500h9.500" stroke="#111" stroke-width="1.600"/><rect x="9.800" y="3.300" width="10" height="10" fill="#a4c8f8" stroke="#111" stroke-width="1.300"/><path d="M9.800 3.500h10" stroke="#111" stroke-width="1.700"/></svg></div>
  <div class="pc" style="left:22px;top:0"><span>2</span></div>
  <div class="pc" style="left:0;top:16.500px"><span>3</span></div>
  <div class="pc" style="left:22px;top:16.500px"><span>4</span></div>
 </div>
 <div class="hd" style="left:258.500px"></div><i class="ah" style="left:258.500px"></i>
 <div class="tk" style="left:264.500px;top:3px"><svg width="14" height="13" viewBox="0 0 14 13"><path d="M1.500 1.500l10 10.500M11.500 1.500l-10 10.500" stroke="#222" stroke-width="1.700"/><path d="M2.500 1.500l10 10.500" stroke="#999" stroke-width=".8"/></svg><span>GTK-Gamess 1.04.1</span></div>
 <div class="tk" style="left:264.500px;top:19px"><svg width="14" height="13" viewBox="0 0 14 13"><rect x="1.500" y="1.500" width="11" height="8" rx="1" fill="#111" stroke="#ccc" stroke-width=".8"/><path d="M3 4h6" stroke="#888" stroke-width=".8"/><path d="M4 11.500h6" stroke="#ccc" stroke-width="1.500"/></svg><span>Shell - Konsole</span></div>
 <div class="tk" style="left:419.500px;top:3px;width:156.500px"><svg width="14" height="13" viewBox="0 0 14 13"><rect x="1.500" y="1" width="11.500" height="11.500" fill="#fafafc"/><circle cx="5" cy="4.300" r="2.800" fill="#ee8c8c" stroke="#c05050" stroke-width=".5"/><circle cx="9" cy="7.300" r="3.300" fill="#6c6cd8" stroke="#3838a0" stroke-width=".5"/><circle cx="8.500" cy="6.800" r="1.200" fill="#b0b0f4"/><path d="M4 7.500v3.500l-1.500 1M5 8.500l1.500 2" stroke="#222" stroke-width=".8" fill="none"/></svg><span>dimer.log - dimer</span></div>
 <div class="tk act" style="left:419.500px;top:19px;width:156.500px"><svg width="14" height="13" viewBox="0 0 14 13"><rect x="1.500" y="1" width="11.500" height="11.500" fill="#fafafc"/><circle cx="5" cy="4.300" r="2.800" fill="#ee8c8c" stroke="#c05050" stroke-width=".5"/><circle cx="9" cy="7.300" r="3.300" fill="#6c6cd8" stroke="#3838a0" stroke-width=".5"/><circle cx="8.500" cy="6.800" r="1.200" fill="#b0b0f4"/><path d="M4 7.500v3.500l-1.500 1M5 8.500l1.500 2" stroke="#222" stroke-width=".8" fill="none"/></svg><span>dimer_opt.xyz - dimer_opt</span></div>
 <div class="hd" style="left:684.500px"></div><i class="ah sm" style="left:684.300px"></i>
 <div class="fl us"><span>us</span></div>
 <div class="fl nt"><svg width="17" height="11" viewBox="0 0 17 11"><path d="M2.500 2.500l5.500.8 2 3 5 1.700-.5 2-6.500-2-2-3.200-3.500-.5z" fill="#fff" stroke="#e0e8ff" stroke-width=".5"/></svg></div>
 <div class="hd" style="left:731px"></div><i class="ah sm" style="left:730.800px"></i>
 <div class="clk">6<b>:</b>46</div>
 <div class="dt">06/07/05</div>
 <div class="phr"><svg width="9" height="36" viewBox="0 0 9 36"><path d="M1.800 14.800l4.800 3.400-4.800 3.400z" fill="#000"/></svg></div>
</div>

</body></html>
